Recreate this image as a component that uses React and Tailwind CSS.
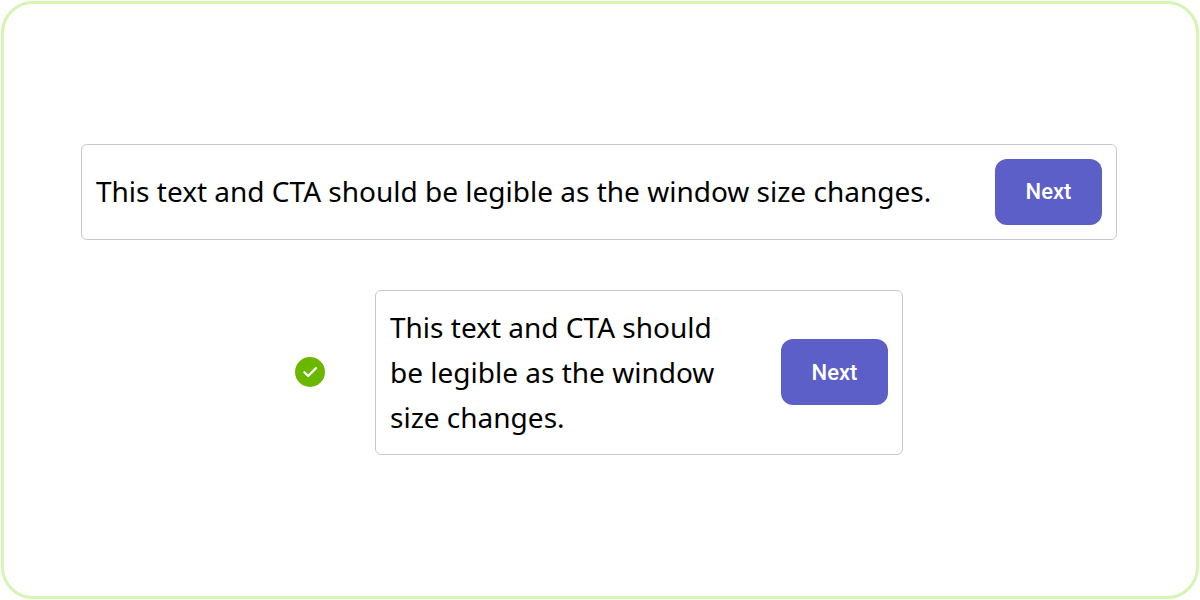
function PromptCard({ className }) {
  return (
    <section
      className={`flex items-center justify-between gap-12 rounded-md border border-[#c8c8c8] bg-white p-3.5 ${className}`}
    >
      <p className="font-['Noto_Sans',sans-serif] text-[28px] leading-[45px] text-black">
        This text and CTA should be legible as the window size changes.
      </p>
      <button
        type="button"
        className="h-[66px] w-[107px] shrink-0 rounded-xl bg-[#5b5fc7] font-['Roboto',sans-serif] text-[22px] font-medium text-white"
      >
        Next
      </button>
    </section>
  );
}

function CheckBadge() {
  return (
    <svg viewBox="0 0 30 30" className="size-[30px] shrink-0" role="img" aria-label="Do">
      <circle cx="15" cy="15" r="15" fill="#6bb700" />
      <path
        d="M9.4 15.2 L13.2 19 L21 11.1"
        fill="none"
        stroke="white"
        strokeWidth="2.3"
        strokeLinecap="round"
        strokeLinejoin="round"
      />
    </svg>
  );
}

export default function App() {
  return (
    <div className="flex min-h-screen bg-white p-px">
      <main className="flex grow flex-col items-center justify-center gap-[50px] rounded-[32px] border-3 border-[#d4f5b3] pr-[79px] pb-0.5 pl-[77px]">
        <PromptCard className="w-full" />
        <div className="flex items-center gap-[50px]">
          <CheckBadge />
          <PromptCard className="max-w-[528px]" />
        </div>
      </main>
    </div>
  );
}
